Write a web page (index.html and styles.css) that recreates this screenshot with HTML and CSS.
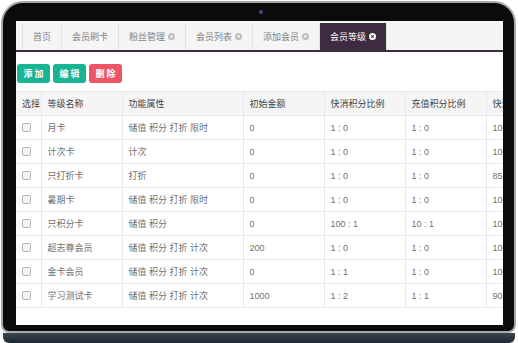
FILE: index.html
```html
<!DOCTYPE html>
<html lang="zh-CN">

<head>
  <meta charset="UTF-8">
  <title>会员等级</title>
  <link rel="stylesheet" href="styles.css">
</head>

<body>
  <!-- 笔记本外框 -->
  <div class="laptop">
    <div class="bezel-top"><span class="camera"></span></div>

    <div class="screen">
      <!-- 标签栏 -->
      <div class="tabs">
        <span class="tab-gap"></span>
        <span class="tab">首页</span>
        <span class="tab">会员刷卡</span>
        <span class="tab">粉丝管理<svg class="close" viewBox="0 0 8 8"><circle cx="4" cy="4" r="4"/><path d="M2.6 2.6 5.4 5.4M5.4 2.6 2.6 5.4"/></svg></span>
        <span class="tab">会员列表<svg class="close" viewBox="0 0 8 8"><circle cx="4" cy="4" r="4"/><path d="M2.6 2.6 5.4 5.4M5.4 2.6 2.6 5.4"/></svg></span>
        <span class="tab">添加会员<svg class="close" viewBox="0 0 8 8"><circle cx="4" cy="4" r="4"/><path d="M2.6 2.6 5.4 5.4M5.4 2.6 2.6 5.4"/></svg></span>
        <span class="tab active">会员等级<svg class="close" viewBox="0 0 8 8"><circle cx="4" cy="4" r="4"/><path d="M2.6 2.6 5.4 5.4M5.4 2.6 2.6 5.4"/></svg></span>
      </div>

      <!-- 操作按钮 -->
      <div class="toolbar">
        <button class="btn btn-green">添加</button>
        <button class="btn btn-green">编辑</button>
        <button class="btn btn-red">删除</button>
      </div>

      <!-- 等级列表 -->
      <table class="grid">
        <colgroup>
          <col style="width:25px">
          <col style="width:81px">
          <col style="width:121px">
          <col style="width:81px">
          <col style="width:81px">
          <col style="width:81px">
          <col style="width:60px">
        </colgroup>
        <thead>
          <tr>
            <th>选择</th>
            <th>等级名称</th>
            <th>功能属性</th>
            <th>初始金额</th>
            <th>快消积分比例</th>
            <th>充值积分比例</th>
            <th>快消折扣</th>
          </tr>
        </thead>
        <tbody>
          <tr><td><input type="checkbox"></td><td>月卡</td><td>储值 积分 打折 限时</td><td>0</td><td>1 : 0</td><td>1 : 0</td><td>100</td></tr>
          <tr><td><input type="checkbox"></td><td>计次卡</td><td>计次</td><td>0</td><td>1 : 0</td><td>1 : 0</td><td>100</td></tr>
          <tr><td><input type="checkbox"></td><td>只打折卡</td><td>打折</td><td>0</td><td>1 : 0</td><td>1 : 0</td><td>85</td></tr>
          <tr><td><input type="checkbox"></td><td>暑期卡</td><td>储值 积分 打折 限时</td><td>0</td><td>1 : 0</td><td>1 : 0</td><td>100</td></tr>
          <tr><td><input type="checkbox"></td><td>只积分卡</td><td>储值 积分</td><td>0</td><td>100 : 1</td><td>10 : 1</td><td>100</td></tr>
          <tr><td><input type="checkbox"></td><td>超志尊会员</td><td>储值 积分 打折 计次</td><td>200</td><td>1 : 0</td><td>1 : 0</td><td>100</td></tr>
          <tr><td><input type="checkbox"></td><td>金卡会员</td><td>储值 积分 打折 计次</td><td>0</td><td>1 : 1</td><td>1 : 0</td><td>100</td></tr>
          <tr><td><input type="checkbox"></td><td>学习测试卡</td><td>储值 积分 打折 计次</td><td>1000</td><td>1 : 2</td><td>1 : 1</td><td>90</td></tr>
        </tbody>
      </table>
    </div>
  </div>
  <div class="base"></div>
</body>

</html>
```

FILE: styles.css
```css
/* 整体 */
body {
  margin: 0;
  background-color: #fff;
  font-family: "Liberation Sans", "Noto Sans CJK SC", sans-serif;
}

/* 笔记本外框 */
.laptop {
  width: 515px;
  margin: 1px 0 0 1px;
  box-sizing: border-box;
  padding: 0 11px 6px 13px;
  background-color: #0b0b0b;
  border: 2px solid #a9a9a9;
  border-radius: 22px 22px 8px 8px;
}

.bezel-top {
  height: 18px;
  display: flex;
  align-items: center;
  justify-content: center;
  padding-left: 2px;
}

.camera {
  width: 4px;
  height: 4px;
  border-radius: 50%;
  background-color: #3b4a7a;
}

.base {
  height: 10px;
  margin: 0 3px;
  background: linear-gradient(#3a4550, #1f2831);
  border-radius: 0 0 6px 6px;
}

/* 屏幕 */
.screen {
  height: 304px;
  background-color: #fff;
  overflow: hidden;
}

/* 标签栏 */
.tabs {
  display: flex;
  height: 27px;
  padding-top: 2px;
  background-color: #f5f5f5;
  border-bottom: 2px solid #3d2b40;
}

.tab-gap {
  width: 6px;
  border-right: 1px solid #e3e3e3;
}

.tab {
  display: flex;
  align-items: center;
  padding: 0 10px;
  font-size: 9px;
  color: #7f7f7f;
  border-right: 1px solid #e3e3e3;
}

.close {
  width: 7px;
  height: 7px;
  margin-left: 3px;
}

.close circle {
  fill: #bdbdbd;
}

.close path {
  stroke: #f5f5f5;
  stroke-width: 1.2;
}

.tab.active {
  background-color: #3d2b40;
  color: #fff;
}

.tab.active .close circle {
  fill: #fff;
}

.tab.active .close path {
  stroke: #3d2b40;
}

/* 按钮 */
.toolbar {
  display: flex;
  gap: 3px;
  margin: 12px 0 8px 1px;
}

.btn {
  width: 33px;
  height: 19px;
  padding: 0;
  border: none;
  border-radius: 3px;
  color: #fff;
  font-family: "Noto Sans CJK SC", sans-serif;
  font-size: 9px;
  font-weight: bold;
  letter-spacing: 2px;
  text-indent: 2px;
}

.btn-green {
  background-color: #1ab394;
}

.btn-red {
  background-color: #ed5565;
}

/* 表格 */
.grid {
  table-layout: fixed;
  width: 530px;
  border-collapse: collapse;
  font-size: 9px;
}

.grid th,
.grid td {
  height: 23px;
  padding: 0 6px;
  text-align: left;
  white-space: nowrap;
  overflow: hidden;
  border: 1px solid #e9e9e9;
}

.grid tr > :first-child {
  border-left: none;
}

.grid th {
  font-weight: normal;
  color: #444;
  background-color: #f5f5f6;
}

.grid td {
  color: #707070;
}

.grid input {
  appearance: none;
  display: block;
  width: 9px;
  height: 9px;
  margin: 0;
  border: 1px solid #b5b5b5;
  border-radius: 2px;
  background-color: #f4f4f4;
}
```
